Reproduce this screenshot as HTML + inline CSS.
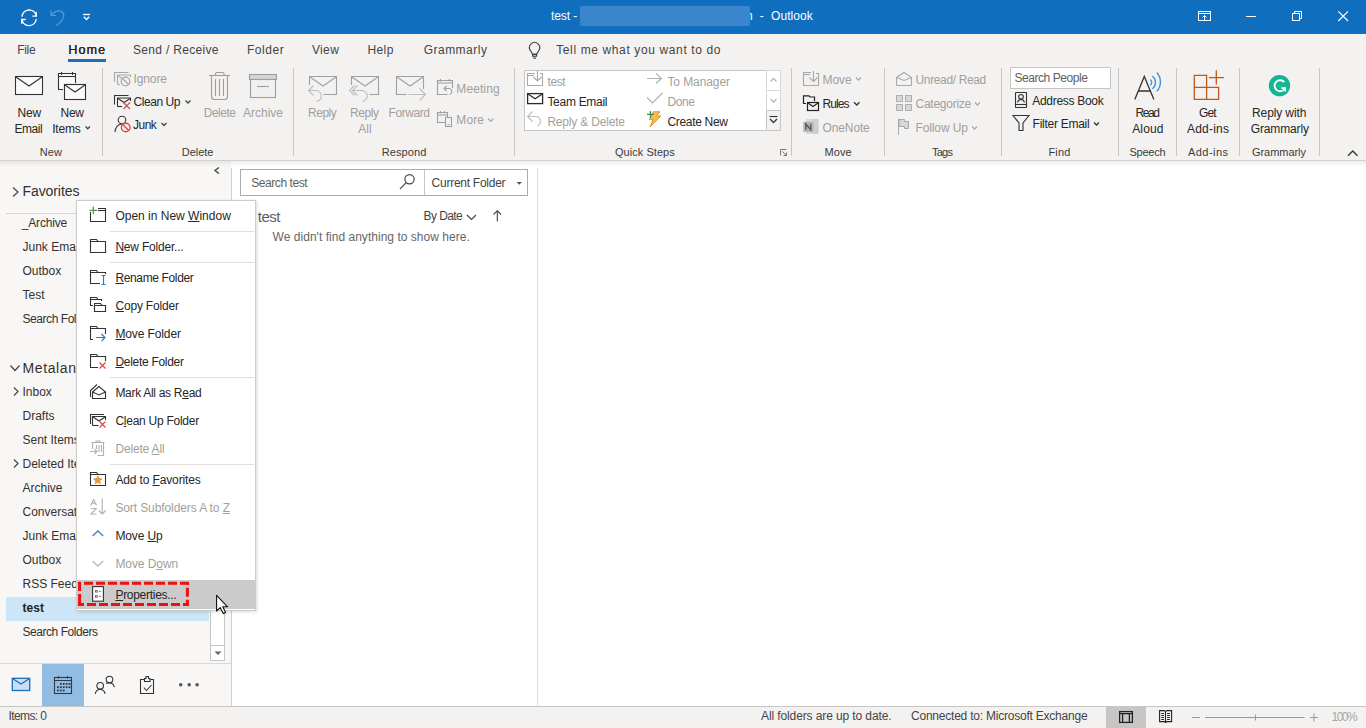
<!DOCTYPE html>
<html><head><meta charset="utf-8">
<style>
html,body{margin:0;padding:0;}
body{width:1366px;height:728px;overflow:hidden;position:relative;background:#fff;font-family:"Liberation Sans",sans-serif;}
.t{position:absolute;white-space:pre;font-family:"Liberation Sans",sans-serif;}
.b{position:absolute;}
svg.i{position:absolute;overflow:visible;}
u{text-decoration:underline;text-underline-offset:1px;text-decoration-thickness:1px;}
</style></head><body>
<!-- title bar -->
<div class="b" style="left:0;top:0;width:1366px;height:34px;background:#106EBE"></div>
<div class="b" style="z-index:3;left:580px;top:6px;width:170px;height:20px;border-radius:2px;background:#3A86CD"></div>
<!-- ribbon -->
<div class="b" style="left:0;top:34px;width:1366px;height:126px;background:#F3F2F1"></div>
<div class="b" style="left:68px;top:59px;width:38px;height:3px;background:#1D6EBF"></div>
<div class="b" style="left:0;top:160px;width:1366px;height:1px;background:#D2D0CE"></div>
<div class="b" style="z-index:1;left:0;top:161px;width:1366px;height:6px;background:linear-gradient(rgba(0,0,0,0.07),rgba(0,0,0,0))"></div>
<!-- ribbon separators -->
<div class="b" style="left:102px;top:68px;width:1px;height:88px;background:#C8C6C4"></div>
<div class="b" style="left:293px;top:68px;width:1px;height:88px;background:#C8C6C4"></div>
<div class="b" style="left:514px;top:68px;width:1px;height:88px;background:#C8C6C4"></div>
<div class="b" style="left:791px;top:68px;width:1px;height:88px;background:#C8C6C4"></div>
<div class="b" style="left:884px;top:68px;width:1px;height:88px;background:#C8C6C4"></div>
<div class="b" style="left:1001px;top:68px;width:1px;height:88px;background:#C8C6C4"></div>
<div class="b" style="left:1118px;top:68px;width:1px;height:88px;background:#C8C6C4"></div>
<div class="b" style="left:1176px;top:68px;width:1px;height:88px;background:#C8C6C4"></div>
<div class="b" style="left:1239px;top:68px;width:1px;height:88px;background:#C8C6C4"></div>
<div class="b" style="left:1319px;top:68px;width:1px;height:88px;background:#C8C6C4"></div>
<!-- quick steps gallery -->
<div class="b" style="left:524px;top:70px;width:256px;height:61px;background:#fff;box-sizing:border-box;border:1px solid #C8C6C4"></div>
<div class="b" style="left:766px;top:70px;width:15px;height:21px;box-sizing:border-box;border:1px solid #DAD8D6;background:#fff"></div>
<div class="b" style="left:766px;top:90px;width:15px;height:21px;box-sizing:border-box;border:1px solid #DAD8D6;background:#fff"></div>
<div class="b" style="left:766px;top:110px;width:15px;height:21px;box-sizing:border-box;border:1px solid #C8C6C4;background:#F3F2F1"></div>
<!-- search people -->
<div class="b" style="left:1010px;top:67px;width:101px;height:22px;background:#fff;box-sizing:border-box;border:1px solid #C8C6C4"></div>
<!-- nav pane -->
<div class="b" style="left:0;top:161px;width:231px;height:545px;background:#F8F7F6"></div>
<div class="b" style="left:231px;top:168px;width:1px;height:538px;background:#D2D0CE"></div>
<div class="b" style="left:6px;top:213px;width:220px;height:1px;background:#D8D6D4"></div>
<div class="b" style="left:6px;top:597px;width:203px;height:24px;background:#CDE6F7"></div>
<!-- nav scrollbar -->
<div class="b" style="left:210px;top:600px;width:15px;height:61px;box-sizing:border-box;border:1px solid #C8C6C4;background:#fff"></div>
<div class="b" style="left:210px;top:645px;width:15px;height:16px;box-sizing:border-box;border:1px solid #C8C6C4;background:#fff"></div>
<div class="b" style="left:0;top:663px;width:231px;height:1px;background:#DAD8D6"></div>
<div class="b" style="left:42px;top:664px;width:42px;height:42px;background:#92BDE2"></div>
<!-- list pane -->
<div class="b" style="left:537px;top:168px;width:1px;height:538px;background:#E1DFDD"></div>
<div class="b" style="left:240px;top:169px;width:288px;height:27px;box-sizing:border-box;border:1px solid #ABABAB;background:#fff"></div>
<div class="b" style="left:424px;top:170px;width:1px;height:25px;background:#C8C6C4"></div>
<!-- status bar -->
<div class="b" style="left:0;top:706px;width:1366px;height:22px;background:#F3F2F1;"></div>
<div class="b" style="left:0;top:706px;width:1366px;height:1px;background:#C8C6C4;"></div>
<div class="b" style="left:1106px;top:707px;width:40px;height:21px;background:#C8C6C4;"></div>
<!-- context menu -->
<div class="b" style="z-index:5;left:76px;top:200px;width:180px;height:411px;background:#fff;box-sizing:border-box;border:1px solid #CCCCCC;box-shadow:1px 1px 3px rgba(0,0,0,0.15)"></div>
<div class="b" style="z-index:5;left:110px;top:231px;width:144px;height:1px;background:#E1DFDD"></div>
<div class="b" style="z-index:5;left:110px;top:262px;width:144px;height:1px;background:#E1DFDD"></div>
<div class="b" style="z-index:5;left:110px;top:377px;width:144px;height:1px;background:#E1DFDD"></div>
<div class="b" style="z-index:5;left:110px;top:464px;width:144px;height:1px;background:#E1DFDD"></div>
<div class="b" style="z-index:5;left:77px;top:580px;width:178px;height:29px;background:#CBCBCB"></div>
<svg class="i" style="z-index:8;left:0;top:0" width="1366" height="728"><g stroke="#F01010" stroke-width="3" fill="none"><path d="M78,583.3 H189" stroke-dasharray="9 3" stroke-dashoffset="6"/><path d="M78,604.5 H189" stroke-dasharray="9 3" stroke-dashoffset="3"/><path d="M79.6,582 V606" stroke-dasharray="9 3"/><path d="M187.4,582 V606" stroke-dasharray="9 3" stroke-dashoffset="6.2"/></g></svg>
<svg class="i" style="left:0;top:0;z-index:1" width="1366" height="728" viewBox="0 0 1366 728" fill="none" stroke-linecap="butt" stroke-linejoin="miter"><g stroke="#fff" stroke-width="1.4" fill="none"><path d="M22,16.6 A7.2,7.2 0 0 1 36.2,15.6"/><path d="M36.2,19 A7.2,7.2 0 0 1 22,20"/><path d="M36.3,11.9 V16.1 H32.4"/><path d="M21.7,23.7 V19.5 H25.8"/></g><g stroke="#5b9bd8" stroke-width="1.2" fill="none"><path d="M51,10.5 L51,15.5 L56,15.5"/><path d="M51.3,15.2 C54,11.5 58.5,10 61.5,11.6 C65,13.5 64.5,18.5 60,22.5 L56.5,25.5"/></g><g stroke="#fff" stroke-width="1.3" fill="none"><path d="M83,14.5 H90"/><path d="M83.8,16.8 L86.5,19.5 L89.2,16.8"/></g><g stroke="#fff" stroke-width="1" fill="none"><rect x="1198.5" y="11.5" width="12" height="9"/><path d="M1198.5,13.5 H1210.5"/><path d="M1204.5,20.5 V15.5 M1202.5,17.5 L1204.5,15.5 L1206.5,17.5"/><path d="M1246,16.5 H1256"/><rect x="1292.5" y="13.5" width="7" height="7"/><path d="M1294.5,13.5 V11.5 H1301.5 V18.5 H1299.5"/><path d="M1338.3,11.3 L1348,21 M1348,11.3 L1338.3,21" stroke-width="1.2"/></g><g stroke="#3a3a3a" stroke-width="1.1" fill="none" transform="translate(0,0.5)"><path d="M532.6,53.8 L530.4,50 A5.1,5.1 0 1 1 538.8,50 L536.6,53.8 Z"/><rect x="532.6" y="53.8" width="4" height="1.9"/><path d="M533.2,57.6 H536"/></g><g stroke="#333" stroke-width="1.1" fill="#fbfbfb"><rect x="15.5" y="76.5" width="27" height="18"/><path d="M16,77 L29,86 L42,77" fill="none"/><path d="M64,89.5 H58.5 V73.5 H75.5 V84" fill="#fbfbfb"/><path d="M58.5,76.5 H75.5" fill="none"/><path d="M61.5,72 V75 M72.5,72 V75" fill="none"/><rect x="64.5" y="84.5" width="21" height="15" stroke="#F3F2F1" stroke-width="3"/><rect x="64.5" y="84.5" width="21" height="15"/><path d="M65,85 L75,92 L85,85" fill="none"/></g><path d="M85.5,126.5 L87.75,128.75 L90,126.5" stroke="#444" stroke-width="1.3" fill="none"/><g stroke="#a8a8a8" stroke-width="1.1" fill="none"><path d="M114.5,82 V72.5 H128.5"/><path d="M117.5,84 V75 H130.5 V77"/><path d="M118,75.5 L122,78.5"/><path d="M117.5,84.5 H120"/><circle cx="125.5" cy="81.5" r="4.3" stroke-width="1.3"/><path d="M122.5,78.5 L128.5,84.5" stroke-width="1.3"/></g><g stroke="#333" stroke-width="1.1" fill="none"><path d="M114.5,104.5 V95.5 H128.5"/><path d="M117.5,106.5 V98 H130.5 V101"/><path d="M118,98.5 L124,102.5 L130,98.5"/><path d="M117.5,106.5 H122"/></g><path d="M123.5,102.5 L130,109 M130,102.5 L123.5,109" stroke="#e0474c" stroke-width="1.2"/><g stroke="#333" stroke-width="1.1" fill="none"><circle cx="122" cy="120" r="3.8"/><path d="M115,132 C115.5,127 118,124.5 121.5,124"/></g><g stroke="#e0474c" stroke-width="1.4" fill="none"><circle cx="125.7" cy="127.5" r="4.3"/><path d="M122.7,124.5 L128.7,130.5"/></g><path d="M161.5,123 L164.0,125.5 L166.5,123" stroke="#444" stroke-width="1.3" fill="none"/><path d="M185.5,100.5 L188.0,103.0 L190.5,100.5" stroke="#444" stroke-width="1.3" fill="none"/><g stroke="#9e9e9e" stroke-width="1.1" fill="none"><path d="M209,75.5 H230"/><path d="M215.5,75 V74 Q215.5,72.5 217,72.5 H222.5 Q224,72.5 224,74 V75"/><path d="M211.5,75.5 V96.5 Q211.5,99.5 214.5,99.5 H224.5 Q227.5,99.5 227.5,96.5 V75.5"/><path d="M215.5,79 V96 M219.5,79 V96 M223.5,79 V96"/></g><g stroke="#9e9e9e" stroke-width="1.1"><rect x="249.5" y="74.5" width="27" height="5" fill="#d4d4d4"/><rect x="250.5" y="79.5" width="25" height="18" fill="#f0f0f0"/><path d="M257,86.5 H269"/></g><g stroke="#a0a0a0" stroke-width="1.1" fill="none"><path d="M309.5,85 V76.5 H336.5 V94.5 H323.5"/><path d="M310,77 L323,86 L336,77"/></g><g stroke="#bdbdbd" stroke-width="1.1" fill="none"><path d="M313.5,85.5 L308.5,90.5 L313.5,95.5"/><path d="M308.5,90.5 H315 A5.5,5.5 0 0 1 316.5,101.5"/></g><g stroke="#a0a0a0" stroke-width="1.1" fill="none"><path d="M351.5,85 V76.5 H378.5 V94.5 H369.5"/><path d="M352,77 L365,86 L378,77"/></g><g stroke="#bdbdbd" stroke-width="1.1" fill="none"><path d="M354.5,85.5 L349.5,90.5 L354.5,95.5"/><path d="M357.5,85.5 L352.5,90.5 L357.5,95.5"/><path d="M352.5,90.5 H361 A5.5,5.5 0 0 1 362.5,101.5"/></g><g stroke="#a0a0a0" stroke-width="1.1" fill="none"><path d="M406.5,94.5 H396.5 V76.5 H423.5 V89"/><path d="M397,77 L410,86 L423,77"/></g><g stroke="#bdbdbd" stroke-width="1.1" fill="none"><path d="M408.5,94.5 H425.5 M419.5,88.5 L425.5,94.5 L419.5,100.5"/></g><g stroke="#a0a0a0" stroke-width="1.1" fill="none"><path d="M447.5,94.5 H437.5 V80.5 H452.5 V88"/><path d="M437.5,83 H452.5"/><path d="M440.5,79 V81.5 M449.5,79 V81.5"/><path d="M446.5,86 L444,88.5 L446.5,91"/><path d="M444.3,88.5 H448 A3,3 0 0 1 449.5,94.5"/></g><g stroke="#a0a0a0" stroke-width="1.1" fill="none"><path d="M445,122.5 H437.5 V112.5 H447.5 V117"/><path d="M437.5,115 H447.5"/><path d="M440.5,111 V113.5 M444.5,111 V113.5"/><rect x="445.5" y="117.5" width="6" height="9"/><path d="M447.5,124.5 H449.5"/></g><path d="M488,118.5 L490.75,121.25 L493.5,118.5" stroke="#aaa" stroke-width="1.3" fill="none"/><g stroke="#a8a8a8" stroke-width="1.1" fill="none"><path d="M535,73.5 H527.5 V85.5 H542.5 V73.5 H540"/><path d="M527.5,75.5 H534"/><path d="M537.5,71 V81 M533.5,77 L537.5,81 L541.5,77"/></g><g stroke="#2b2b2b" stroke-width="1.3" fill="none"><rect x="527.6" y="93.6" width="15" height="10"/><path d="M528,94 L535.1,98.8 L542.2,94"/></g><g stroke="#bdbdbd" stroke-width="1.1" fill="none"><path d="M532.5,111.5 L527.5,116.5 L532.5,121.5"/><path d="M527.5,116.5 H535 A5,5 0 0 1 537.5,126"/></g><g stroke="#b0b0b0" stroke-width="1.1" fill="none"><path d="M647,78.5 H661.5 M656,73.5 L661.5,78.5 L656,83.5"/><path d="M647,97.5 L652.5,103 L662.5,93"/></g><path d="M653.3,111.8 H660 L656.6,116 H660.8 L650.2,126.8 L653,119.6 H649.4 Z" fill="#f6bd55" stroke="#d98b22" stroke-width="0.9" stroke-linejoin="round"/><path d="M647,114.4 H653.8 M650.4,111 V117.8" stroke="#3a8a55" stroke-width="1.2"/><path d="M770.5,81.5 L773.5,78.5 L776.5,81.5" stroke="#b5b5b5" stroke-width="1.3" fill="none"/><path d="M770.5,99 L773.5,102.0 L776.5,99" stroke="#b5b5b5" stroke-width="1.3" fill="none"/><path d="M769.5,116.5 H777.5" stroke="#333" stroke-width="1.1"/><path d="M770,119 L773.5,122.5 L777,119" stroke="#333" stroke-width="1.3" fill="none"/><g stroke="#777" stroke-width="1" fill="none"><path d="M780.5,155.5 V149.5 H786.5"/><path d="M782.5,151.5 L786.5,155.5 M786.5,152.5 V155.5 H783.5"/></g><g stroke="#a8a8a8" stroke-width="1.1" fill="none"><path d="M811,72.5 H803.5 V85.5 H818.5 V73.5 H816"/><path d="M803.5,74.5 H810"/><path d="M813.5,71 V81.5 M809.5,77.5 L813.5,81.5 L817.5,77.5"/></g><path d="M856,77.5 L858.5,80.0 L861,77.5" stroke="#aaa" stroke-width="1.3" fill="none"/><g stroke="#222" stroke-width="1.2" fill="none"><path d="M806,103.5 H803.5 V95.9 H809 L810,97 H814.5 V101.5"/></g><rect x="807.5" y="102.5" width="11" height="8" stroke="#F3F2F1" stroke-width="2.5" fill="#F3F2F1"/><g stroke="#222" stroke-width="1.2" fill="none"><rect x="807.5" y="102.5" width="11" height="8"/><path d="M808,103 L813,106.5 L818,103"/></g><path d="M854,102.3 L856.75,105.05 L859.5,102.3" stroke="#333" stroke-width="1.3" fill="none"/><rect x="806" y="119" width="12.5" height="15" fill="#d9d9d9"/><rect x="812" y="119" width="6.5" height="15" fill="#cfcfcf"/><rect x="803.3" y="121.8" width="10" height="10.2" fill="#b4b4b4"/><path d="M805.8,129.8 V124 L810.8,129.8 V124" stroke="#5a5a5a" stroke-width="1.4" fill="none"/><g stroke="#a8a8a8" stroke-width="1.1" fill="none"><path d="M896.5,77.5 L904,72.5 L911.5,77.5 V85.5 H896.5 Z"/><path d="M896.5,77.5 L904,80.5 L911.5,77.5"/></g><g stroke="#b0b0b0" stroke-width="1" fill="#d8d8d8"><rect x="896.5" y="95.5" width="6" height="6"/><rect x="905.5" y="95.5" width="6" height="6"/><rect x="896.5" y="104.5" width="6" height="6"/><rect x="905.5" y="104.5" width="6" height="6"/></g><g stroke="#a8a8a8" stroke-width="1"><path d="M898.5,119 V135" fill="none"/><path d="M899,119.5 H904.5 V121.5 H908.5 V128.5 H904.5 V126.5 H899 Z" fill="#d8d8d8"/></g><path d="M975,102.5 L977.5,105.0 L980,102.5" stroke="#aaa" stroke-width="1.3" fill="none"/><path d="M972,126.5 L974.5,129.0 L977,126.5" stroke="#aaa" stroke-width="1.3" fill="none"/><g stroke="#333" stroke-width="1.1" fill="none"><rect x="1015.5" y="92.5" width="11" height="15" rx="0.5"/><path d="M1015.5,104.5 H1026.5"/><circle cx="1021" cy="96.8" r="2.3"/><path d="M1017.5,102.5 C1018,100 1019.5,99.5 1021,99.5 C1022.5,99.5 1024,100 1024.5,102.5"/><path d="M1013,115.5 H1029 L1023,123 V130.5 H1019 V123 Z"/></g><path d="M1094,122.5 L1096.5,125.0 L1099,122.5" stroke="#333" stroke-width="1.3" fill="none"/><g stroke="#333" stroke-width="1.3" fill="none"><path d="M1134.8,99.5 L1144.3,76.4 L1153.9,99.5 M1138,91 H1150.5"/></g><g stroke="#3c8fd6" stroke-width="1.3" fill="none"><path d="M1150.3,79.6 A3.5,3.5 0 0 1 1150.3,85.2"/><path d="M1152.3,76 A8,8 0 0 1 1152.3,88.8"/><path d="M1156.8,72.5 A14,14 0 0 1 1156.8,91.3"/></g><g stroke="#c0571b" stroke-width="1.3" fill="none"><path d="M1194.3,75.3 H1206.6 V99.4 H1194.3 Z M1194.3,87.4 H1218.6 V99.4 H1206.6"/><path d="M1209,77.6 H1223.8 M1216.3,70.2 V84.6"/></g><circle cx="1279.5" cy="85.6" r="10.7" fill="#15b592"/><path d="M1284.3,82.2 A5.5,5.5 0 1 0 1284.8,88.6" stroke="#fff" stroke-width="1.8" fill="none"/><path d="M1281.3,88.1 H1285.3 V91.6" stroke="#fff" stroke-width="1.6" fill="none"/><path d="M1348,155.75 L1352.75,151 L1357.5,155.75" stroke="#333" stroke-width="1.3" fill="none"/><path d="M219,167.5 L215,170.5 L219,173.5" stroke="#444" stroke-width="1.4" fill="none"/><path d="M13,187.5 L18,192 L13,196.5" stroke="#444" stroke-width="1.2" fill="none"/><path d="M10.5,365.5 L15,370.5 L19.5,365.5" stroke="#444" stroke-width="1.2" fill="none"/><path d="M14,387.5 L18,391.5 L14,395.5" stroke="#444" stroke-width="1.2" fill="none"/><path d="M14,459.5 L18,463.5 L14,467.5" stroke="#444" stroke-width="1.2" fill="none"/><path d="M214.5,651.5 H221.5 L218,655 Z" fill="#666"/><g stroke="#1e6eb7" stroke-width="1.3"><rect x="12.3" y="678.3" width="17.4" height="12.2" fill="#c8e0f5"/><path d="M12.8,678.8 L21,684 L29.2,678.8" fill="none"/></g><g stroke="#2e3a46" stroke-width="1.1" fill="none"><rect x="54.5" y="677.5" width="17" height="16"/><path d="M54.5,680.5 H71.5 M58.5,676 V678.5 M67.5,676 V678.5"/></g><g fill="#2e3a46"><rect x="59.9" y="683.0" width="1.8" height="1.8"/><rect x="62.8" y="683.0" width="1.8" height="1.8"/><rect x="65.7" y="683.0" width="1.8" height="1.8"/><rect x="68.6" y="683.0" width="1.8" height="1.8"/><rect x="57.0" y="686.3" width="1.8" height="1.8"/><rect x="59.9" y="686.3" width="1.8" height="1.8"/><rect x="62.8" y="686.3" width="1.8" height="1.8"/><rect x="65.7" y="686.3" width="1.8" height="1.8"/><rect x="68.6" y="686.3" width="1.8" height="1.8"/><rect x="57.0" y="689.6" width="1.8" height="1.8"/><rect x="59.9" y="689.6" width="1.8" height="1.8"/><rect x="62.8" y="689.6" width="1.8" height="1.8"/></g><g stroke="#333" stroke-width="1.1" fill="none"><circle cx="100.2" cy="685.8" r="3.3"/><path d="M95.3,693.8 C95.8,690.5 97.5,689.5 100.2,689.5 C103,689.5 104.6,690.5 105.1,693.8"/><circle cx="109.5" cy="679.5" r="3.3"/><path d="M106,683.3 C106.8,683.2 108,683 109.5,683 C112.3,683 113.9,684 114.3,687.3"/></g><g stroke="#333" stroke-width="1.1" fill="none"><path d="M144,679.5 H140.5 V693.5 H153.5 V679.5 H150"/><path d="M144.5,681.5 V678.5 H146 V676.5 H148.5 V678.5 H150 V681.5 Z"/><path d="M143.8,687.5 L146.5,690.5 L151.5,685"/></g><g fill="#555"><circle cx="180.7" cy="684.8" r="1.8"/><circle cx="189.2" cy="684.8" r="1.8"/><circle cx="197.1" cy="684.8" r="1.8"/></g><g stroke="#444" stroke-width="1.2" fill="none"><circle cx="409.5" cy="179.2" r="4.6"/><path d="M406.2,182.6 L400,188.9"/></g><path d="M516.5,182 H522 L519.25,184.8 Z" fill="#555"/><path d="M467,215 L471.5,219.5 L476,215" stroke="#444" stroke-width="1.2" fill="none"/><path d="M497.3,221.5 V211 M493.5,214.5 L497.3,210.7 L501.1,214.5" stroke="#444" stroke-width="1.1" fill="none"/><g stroke="#222" stroke-width="1.25" fill="none"><rect x="1119.6" y="711.6" width="12.8" height="10.8"/><path d="M1119.6,713.6 H1132.4 M1122.6,713.6 V722.4 M1129.4,713.6 V722.4"/></g><g stroke="#222" stroke-width="1.1" fill="none"><path d="M1159.6,710.6 H1164.2 L1165.5,711.6 L1166.8,710.6 H1171.6 V721.6 H1166.6 L1165.5,722.6 L1164.4,721.6 H1159.6 Z M1165.5,711.6 V722.8"/></g><g stroke="#222" stroke-width="1" fill="none"><path d="M1161.3,713.5 H1164 M1161.3,715.5 H1164 M1161.3,717.5 H1164 M1161.3,719.5 H1164 M1167.1,713.5 H1169.9 M1167.1,715.5 H1169.9 M1167.1,717.5 H1169.9 M1167.1,719.5 H1169.9"/></g><g stroke="#999" stroke-width="1" fill="none"><path d="M1192,717.5 H1200 M1205,717.5 H1304.5 M1255.5,714.5 V720.5 M1310,717.5 H1318 M1314,713.5 V721.5"/></g></svg><svg class="i" style="left:0;top:0;z-index:7" width="1366" height="728" viewBox="0 0 1366 728" fill="none" stroke-linecap="butt" stroke-linejoin="miter"><g stroke="#333" stroke-width="1.1" fill="none"><path d="M90.5,212 V221.5 H105.5 V208.5 H98"/><path d="M98,210.5 H105.5"/></g><path d="M89.5,210.3 H97 M93.3,206.5 V214" stroke="#3a9a57" stroke-width="1.2"/><g stroke="#333" stroke-width="1.1" fill="none"><path d="M90.5,241.5 H105.5 V252.5 H90.5 Z"/><path d="M90.5,241.5 V239.5 H96.5 L98.0,241.5"/></g><g stroke="#333" stroke-width="1.1" fill="none"><path d="M105.5,274 V272.5 H90.5 V283.5 H100"/><path d="M90.5,272.5 V270.5 H96.5 L98.0,272.5"/></g><path d="M103.5,275.5 V284.5 M101.5,275.5 H105.5 M101.5,284.5 H105.5" stroke="#2b7cd3" stroke-width="1.2" fill="none"/><g stroke="#333" stroke-width="1.1" fill="none"><path d="M101.5,301 V299.5 H90.5 V305.5 H93"/><path d="M90.5,299.5 V297.5 H96.5 L98.0,299.5"/></g><g stroke="#333" stroke-width="1.1" fill="none"><path d="M94.5,305.5 H105.5 V311.5 H94.5 Z"/><path d="M94.5,305.5 V303.5 H100.5 L102.0,305.5"/></g><g stroke="#333" stroke-width="1.1" fill="none"><path d="M105.5,334 V328.5 H90.5 V339.5 H93"/><path d="M90.5,328.5 V326.5 H96.5 L98.0,328.5"/></g><path d="M96,337.5 H105 M101.5,334 L105,337.5 L101.5,341" stroke="#2b7cd3" stroke-width="1.2" fill="none"/><g stroke="#333" stroke-width="1.1" fill="none"><path d="M105.5,361 V356.5 H90.5 V367.5 H98"/><path d="M90.5,356.5 V354.5 H96.5 L98.0,356.5"/></g><path d="M99.5,362.5 L105.5,368.5 M105.5,362.5 L99.5,368.5" stroke="#e0474c" stroke-width="1.2"/><g stroke="#333" stroke-width="1.1" fill="none"><path d="M92.5,392 L99,386.5 L105.5,392 V398.5 H92.5 Z"/><path d="M92.5,392 L99,395 L105.5,392"/><path d="M90.5,397 V390.5 L97,384.5"/></g><g stroke="#333" stroke-width="1.1" fill="none"><path d="M90.5,424 V414.5 H104"/><path d="M92.5,425.5 V416.5 H105.5 V420"/><path d="M93,417 L99,421 L105,417"/><path d="M92.5,425.5 H98.5"/></g><path d="M99.5,421.5 L105.5,427.5 M105.5,421.5 L99.5,427.5" stroke="#e0474c" stroke-width="1.2"/><g stroke="#b0b0b0" stroke-width="1.1" fill="none"><path d="M91.5,442.5 H104.5 M96,442 V441 H100 V442"/><path d="M92.5,442.5 V449 M103.5,442.5 V455.5 H97.5"/><path d="M96.5,445 V449 M99,445 V452 M101.5,445 V452"/><path d="M90,451.5 H97 M94.5,449 L97,451.5 L94.5,454"/></g><g stroke="#333" stroke-width="1.1" fill="none"><path d="M90.5,474.5 H105.5 V485.5 H90.5 Z"/><path d="M90.5,474.5 V472.5 H96.5 L98.0,474.5"/></g><path d="M97.8,475.8 L99,478.6 L102,478.9 L99.7,480.9 L100.4,483.8 L97.8,482.3 L95.2,483.8 L95.9,480.9 L93.6,478.9 L96.6,478.6 Z" fill="#ee9a2e" stroke="#d9801b" stroke-width="0.6"/><g stroke="#b0b0b0" stroke-width="1.1" fill="none"><path d="M90.7,505.5 L93.6,499.5 L96.5,505.5 M91.8,503.3 H95.4"/><path d="M90.9,508.5 H96.3 L90.9,514 H96.5"/><path d="M102.2,498.5 V514 M98.7,510.5 L102.2,514 L105.7,510.5"/></g><path d="M92.6,536 L97.9,531 L103.2,536" stroke="#3a7fc6" stroke-width="1.3" fill="none"/><path d="M92.6,561 L97.9,566 L103.2,561" stroke="#b8b8b8" stroke-width="1.3" fill="none"/><g stroke="#333" stroke-width="1.1"><rect x="92.6" y="586.6" width="10.8" height="14.6" fill="#fff"/></g><g stroke="#666" stroke-width="0.9" fill="none"><rect x="95.5" y="590.5" width="1.8" height="1.6"/><rect x="95.5" y="595.6" width="1.8" height="1.6"/><path d="M98.9,591.3 H101 M98.9,596.4 H101"/></g><path d="M216.6,595.4 V611 L220.2,607.7 L223.3,613.6 L225.6,612.4 L222.8,606.8 H227.6 Z" fill="#fff" stroke="#111" stroke-width="1.1" stroke-linejoin="round"/></svg>
<span class='t' style='left:551.0px;top:10.04px;font-size:12px;line-height:12px;color:#ffffff;letter-spacing:-0.094px;'>test -</span>
<span class='t' style='left:746.0px;top:10.04px;font-size:12px;line-height:12px;color:#ffffff;letter-spacing:0.000px;z-index:2;'>n</span>
<span class='t' style='left:759.7px;top:10.04px;font-size:12px;line-height:12px;color:#ffffff;letter-spacing:0.000px;'>-</span>
<span class='t' style='left:771.0px;top:10.04px;font-size:12px;line-height:12px;color:#ffffff;letter-spacing:0.073px;'>Outlook</span>
<span class='t' style='left:17.2px;top:44.34px;font-size:12px;line-height:12px;color:#444;letter-spacing:-0.315px;'>File</span>
<span class='t' style='left:68.2px;top:43.92px;font-size:12.5px;line-height:12.5px;color:#262626;letter-spacing:1.119px;text-shadow:0.4px 0 0 #262626;'>Home</span>
<span class='t' style='left:133.0px;top:44.34px;font-size:12px;line-height:12px;color:#444;letter-spacing:0.308px;'>Send / Receive</span>
<span class='t' style='left:247.0px;top:44.34px;font-size:12px;line-height:12px;color:#444;letter-spacing:0.537px;'>Folder</span>
<span class='t' style='left:312.0px;top:44.34px;font-size:12px;line-height:12px;color:#444;letter-spacing:0.334px;'>View</span>
<span class='t' style='left:367.4px;top:44.14px;font-size:12px;line-height:12px;color:#444;letter-spacing:0.438px;'>Help</span>
<span class='t' style='left:423.7px;top:44.14px;font-size:12px;line-height:12px;color:#444;letter-spacing:0.482px;'>Grammarly</span>
<span class='t' style='left:556.2px;top:44.04px;font-size:12px;line-height:12px;color:#444;letter-spacing:0.624px;'>Tell me what you want to do</span>
<span class='t' style='left:17.6px;top:106.84px;font-size:12px;line-height:12px;color:#262626;letter-spacing:-0.258px;'>New</span>
<span class='t' style='left:14.4px;top:123.24px;font-size:12px;line-height:12px;color:#262626;letter-spacing:-0.454px;'>Email</span>
<span class='t' style='left:60.6px;top:106.84px;font-size:12px;line-height:12px;color:#262626;letter-spacing:-0.308px;'>New</span>
<span class='t' style='left:52.2px;top:123.24px;font-size:12px;line-height:12px;color:#262626;letter-spacing:-0.186px;'>Items</span>
<span class='t' style='left:39.7px;top:147.19px;font-size:11px;line-height:11px;color:#3B3A39;letter-spacing:0.142px;'>New</span>
<span class='t' style='left:133.4px;top:72.84px;font-size:12px;line-height:12px;color:#A19F9D;letter-spacing:-0.086px;'>Ignore</span>
<span class='t' style='left:133.4px;top:96.34px;font-size:12px;line-height:12px;color:#262626;letter-spacing:-0.419px;'>Clean Up</span>
<span class='t' style='left:133.0px;top:118.94px;font-size:12px;line-height:12px;color:#262626;letter-spacing:-0.520px;'>Junk</span>
<span class='t' style='left:203.7px;top:107.34px;font-size:12px;line-height:12px;color:#A19F9D;letter-spacing:-0.478px;'>Delete</span>
<span class='t' style='left:243.0px;top:107.34px;font-size:12px;line-height:12px;color:#A19F9D;letter-spacing:-0.003px;'>Archive</span>
<span class='t' style='left:181.7px;top:146.89px;font-size:11px;line-height:11px;color:#3B3A39;letter-spacing:0.001px;'>Delete</span>
<span class='t' style='left:308.0px;top:107.04px;font-size:12px;line-height:12px;color:#A19F9D;letter-spacing:-0.472px;'>Reply</span>
<span class='t' style='left:350.0px;top:107.04px;font-size:12px;line-height:12px;color:#A19F9D;letter-spacing:-0.422px;'>Reply</span>
<span class='t' style='left:358.2px;top:122.74px;font-size:12px;line-height:12px;color:#A19F9D;letter-spacing:0.028px;'>All</span>
<span class='t' style='left:388.5px;top:107.04px;font-size:12px;line-height:12px;color:#A19F9D;letter-spacing:-0.419px;'>Forward</span>
<span class='t' style='left:456.3px;top:82.64px;font-size:12px;line-height:12px;color:#A19F9D;letter-spacing:0.099px;'>Meeting</span>
<span class='t' style='left:456.3px;top:113.74px;font-size:12px;line-height:12px;color:#A19F9D;letter-spacing:0.085px;'>More</span>
<span class='t' style='left:381.7px;top:146.59px;font-size:11px;line-height:11px;color:#3B3A39;letter-spacing:0.109px;'>Respond</span>
<span class='t' style='left:547.4px;top:75.74px;font-size:12px;line-height:12px;color:#A19F9D;letter-spacing:-0.348px;'>test</span>
<span class='t' style='left:547.4px;top:96.14px;font-size:12px;line-height:12px;color:#262626;letter-spacing:-0.287px;'>Team Email</span>
<span class='t' style='left:547.4px;top:116.04px;font-size:12px;line-height:12px;color:#A19F9D;letter-spacing:-0.188px;'>Reply &amp; Delete</span>
<span class='t' style='left:667.4px;top:75.74px;font-size:12px;line-height:12px;color:#A19F9D;letter-spacing:-0.086px;'>To Manager</span>
<span class='t' style='left:667.4px;top:96.14px;font-size:12px;line-height:12px;color:#A19F9D;letter-spacing:-0.362px;'>Done</span>
<span class='t' style='left:667.4px;top:116.04px;font-size:12px;line-height:12px;color:#262626;letter-spacing:-0.307px;'>Create New</span>
<span class='t' style='left:615.0px;top:147.19px;font-size:11px;line-height:11px;color:#3B3A39;letter-spacing:0.039px;'>Quick Steps</span>
<span class='t' style='left:822.6px;top:74.24px;font-size:12px;line-height:12px;color:#A19F9D;letter-spacing:-0.081px;'>Move</span>
<span class='t' style='left:822.6px;top:98.14px;font-size:12px;line-height:12px;color:#262626;letter-spacing:-0.922px;'>Rules</span>
<span class='t' style='left:822.6px;top:121.54px;font-size:12px;line-height:12px;color:#A19F9D;letter-spacing:-0.139px;'>OneNote</span>
<span class='t' style='left:824.5px;top:147.09px;font-size:11px;line-height:11px;color:#3B3A39;letter-spacing:0.098px;'>Move</span>
<span class='t' style='left:915.5px;top:73.74px;font-size:12px;line-height:12px;color:#A19F9D;letter-spacing:-0.356px;'>Unread/ Read</span>
<span class='t' style='left:915.5px;top:97.64px;font-size:12px;line-height:12px;color:#A19F9D;letter-spacing:-0.259px;'>Categorize</span>
<span class='t' style='left:915.5px;top:121.54px;font-size:12px;line-height:12px;color:#A19F9D;letter-spacing:-0.120px;'>Follow Up</span>
<span class='t' style='left:932.0px;top:147.09px;font-size:11px;line-height:11px;color:#3B3A39;letter-spacing:-0.750px;'>Tags</span>
<span class='t' style='left:1014.4px;top:72.24px;font-size:12px;line-height:12px;color:#605E5C;letter-spacing:-0.436px;'>Search People</span>
<span class='t' style='left:1032.3px;top:94.94px;font-size:12px;line-height:12px;color:#262626;letter-spacing:-0.302px;'>Address Book</span>
<span class='t' style='left:1032.6px;top:118.04px;font-size:12px;line-height:12px;color:#262626;letter-spacing:-0.274px;'>Filter Email</span>
<span class='t' style='left:1048.4px;top:146.59px;font-size:11px;line-height:11px;color:#3B3A39;letter-spacing:0.165px;'>Find</span>
<span class='t' style='left:1135.6px;top:106.64px;font-size:12px;line-height:12px;color:#262626;letter-spacing:-1.429px;'>Read</span>
<span class='t' style='left:1132.2px;top:122.64px;font-size:12px;line-height:12px;color:#262626;letter-spacing:0.149px;'>Aloud</span>
<span class='t' style='left:1129.4px;top:146.59px;font-size:11px;line-height:11px;color:#3B3A39;letter-spacing:-0.222px;'>Speech</span>
<span class='t' style='left:1199.0px;top:106.64px;font-size:12px;line-height:12px;color:#262626;letter-spacing:-0.872px;'>Get</span>
<span class='t' style='left:1187.0px;top:122.64px;font-size:12px;line-height:12px;color:#262626;letter-spacing:0.219px;'>Add-ins</span>
<span class='t' style='left:1188.0px;top:146.59px;font-size:11px;line-height:11px;color:#3B3A39;letter-spacing:0.451px;'>Add-ins</span>
<span class='t' style='left:1252.0px;top:106.64px;font-size:12px;line-height:12px;color:#262626;letter-spacing:-0.107px;'>Reply with</span>
<span class='t' style='left:1250.7px;top:122.64px;font-size:12px;line-height:12px;color:#262626;letter-spacing:-0.130px;'>Grammarly</span>
<span class='t' style='left:1252.0px;top:146.59px;font-size:11px;line-height:11px;color:#3B3A39;letter-spacing:-0.049px;'>Grammarly</span>
<span class='t' style='left:22.5px;top:184.25px;font-size:14px;line-height:14px;color:#323130;letter-spacing:-0.085px;'>Favorites</span>
<span class='t' style='left:21.7px;top:216.64px;font-size:12px;line-height:12px;color:#323130;letter-spacing:-0.155px;'>_Archive</span>
<span class='t' style='left:22.5px;top:240.74px;font-size:12px;line-height:12px;color:#323130;letter-spacing:0.000px;'>Junk Email</span>
<span class='t' style='left:22.5px;top:265.14px;font-size:12px;line-height:12px;color:#323130;letter-spacing:-0.001px;'>Outbox</span>
<span class='t' style='left:22.5px;top:289.14px;font-size:12px;line-height:12px;color:#323130;letter-spacing:0.000px;'>Test</span>
<span class='t' style='left:22.5px;top:313.14px;font-size:12px;line-height:12px;color:#323130;letter-spacing:-0.444px;'>Search Folders</span>
<span class='t' style='left:22.5px;top:361.35px;font-size:14px;line-height:14px;color:#323130;letter-spacing:0.615px;'>Metalan</span>
<span class='t' style='left:22.5px;top:386.14px;font-size:12px;line-height:12px;color:#323130;letter-spacing:0.000px;'>Inbox</span>
<span class='t' style='left:22.5px;top:409.74px;font-size:12px;line-height:12px;color:#323130;letter-spacing:0.000px;'>Drafts</span>
<span class='t' style='left:22.5px;top:433.64px;font-size:12px;line-height:12px;color:#323130;letter-spacing:0.000px;'>Sent Items</span>
<span class='t' style='left:22.5px;top:457.64px;font-size:12px;line-height:12px;color:#323130;letter-spacing:0.000px;'>Deleted Items</span>
<span class='t' style='left:22.5px;top:481.64px;font-size:12px;line-height:12px;color:#323130;letter-spacing:0.000px;'>Archive</span>
<span class='t' style='left:22.5px;top:505.64px;font-size:12px;line-height:12px;color:#323130;letter-spacing:0.000px;'>Conversation History</span>
<span class='t' style='left:22.5px;top:529.64px;font-size:12px;line-height:12px;color:#323130;letter-spacing:0.000px;'>Junk Email</span>
<span class='t' style='left:22.5px;top:553.64px;font-size:12px;line-height:12px;color:#323130;letter-spacing:-0.001px;'>Outbox</span>
<span class='t' style='left:22.5px;top:577.64px;font-size:12px;line-height:12px;color:#323130;letter-spacing:0.000px;'>RSS Feeds</span>
<span class='t' style='left:22.4px;top:602.14px;font-size:12px;line-height:12px;color:#252423;letter-spacing:0.085px;font-weight:bold;'>test</span>
<span class='t' style='left:22.4px;top:625.84px;font-size:12px;line-height:12px;color:#323130;letter-spacing:-0.444px;'>Search Folders</span>
<span class='t' style='left:251.2px;top:177.34px;font-size:12px;line-height:12px;color:#605E5C;letter-spacing:-0.420px;'>Search test</span>
<span class='t' style='left:431.6px;top:177.34px;font-size:12px;line-height:12px;color:#444;letter-spacing:-0.260px;'>Current Folder</span>
<span class='t' style='left:257.8px;top:208.80px;font-size:15px;line-height:15px;color:#605E5C;letter-spacing:-0.496px;'>test</span>
<span class='t' style='left:423.6px;top:210.04px;font-size:12px;line-height:12px;color:#444;letter-spacing:-0.581px;'>By Date</span>
<span class='t' style='left:272.6px;top:231.14px;font-size:12px;line-height:12px;color:#666;letter-spacing:0.028px;'>We didn&#x27;t find anything to show here.</span>
<span class='t' style='left:8.5px;top:710.24px;font-size:12px;line-height:12px;color:#444;letter-spacing:-0.598px;'>Items: 0</span>
<span class='t' style='left:761.0px;top:710.34px;font-size:12px;line-height:12px;color:#444;letter-spacing:-0.109px;'>All folders are up to date.</span>
<span class='t' style='left:911.0px;top:710.34px;font-size:12px;line-height:12px;color:#444;letter-spacing:-0.221px;'>Connected to: Microsoft Exchange</span>
<span class='t' style='left:1331.5px;top:710.54px;font-size:12px;line-height:12px;color:#A6A6A6;letter-spacing:-1.501px;'>100%</span>
<span class='t' style='left:115.4px;top:209.94px;font-size:12px;line-height:12px;color:#262626;letter-spacing:0.001px;z-index:6;'>Open in New <u>W</u>indow</span>
<span class='t' style='left:115.4px;top:240.74px;font-size:12px;line-height:12px;color:#262626;letter-spacing:-0.200px;z-index:6;'><u>N</u>ew Folder...</span>
<span class='t' style='left:115.4px;top:271.54px;font-size:12px;line-height:12px;color:#262626;letter-spacing:-0.360px;z-index:6;'><u>R</u>ename Folder</span>
<span class='t' style='left:115.4px;top:300.14px;font-size:12px;line-height:12px;color:#262626;letter-spacing:-0.177px;z-index:6;'><u>C</u>opy Folder</span>
<span class='t' style='left:115.4px;top:327.84px;font-size:12px;line-height:12px;color:#262626;letter-spacing:-0.110px;z-index:6;'><u>M</u>ove Folder</span>
<span class='t' style='left:115.4px;top:355.84px;font-size:12px;line-height:12px;color:#262626;letter-spacing:-0.287px;z-index:6;'><u>D</u>elete Folder</span>
<span class='t' style='left:115.4px;top:386.74px;font-size:12px;line-height:12px;color:#262626;letter-spacing:-0.296px;z-index:6;'>Mark All as R<u>e</u>ad</span>
<span class='t' style='left:115.4px;top:414.74px;font-size:12px;line-height:12px;color:#262626;letter-spacing:-0.256px;z-index:6;'>C<u>l</u>ean Up Folder</span>
<span class='t' style='left:115.4px;top:442.94px;font-size:12px;line-height:12px;color:#A19F9D;letter-spacing:-0.169px;z-index:6;'>Delete <u>A</u>ll</span>
<span class='t' style='left:115.4px;top:474.14px;font-size:12px;line-height:12px;color:#262626;letter-spacing:-0.134px;z-index:6;'>Add to <u>F</u>avorites</span>
<span class='t' style='left:115.4px;top:502.34px;font-size:12px;line-height:12px;color:#A19F9D;letter-spacing:-0.102px;z-index:6;'>Sort Subfolders A to <u>Z</u></span>
<span class='t' style='left:115.4px;top:529.94px;font-size:12px;line-height:12px;color:#262626;letter-spacing:-0.108px;z-index:6;'>Move <u>U</u>p</span>
<span class='t' style='left:115.4px;top:558.14px;font-size:12px;line-height:12px;color:#A19F9D;letter-spacing:-0.072px;z-index:6;'>Move D<u>o</u>wn</span>
<span class='t' style='left:115.4px;top:589.34px;font-size:12px;line-height:12px;color:#262626;letter-spacing:-0.285px;z-index:6;'><u>P</u>roperties...</span>
</body></html>
